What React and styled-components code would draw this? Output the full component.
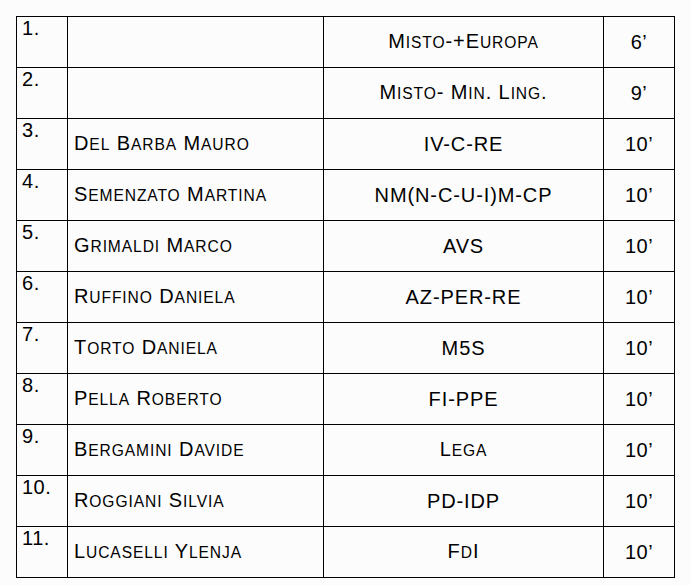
import styled, { createGlobalStyle } from "styled-components";

const GlobalStyle = createGlobalStyle`
  html, body {
    margin: 0;
    background: #fcfcfc;
  }
`;

const rows = [
  { name: "", group: "Misto-+Europa", time: "6’" },
  { name: "", group: "Misto- Min. Ling.", time: "9’" },
  { name: "Del Barba Mauro", group: "IV-C-RE", time: "10’" },
  { name: "Semenzato Martina", group: "NM(N-C-U-I)M-CP", time: "10’" },
  { name: "Grimaldi Marco", group: "AVS", time: "10’" },
  { name: "Ruffino Daniela", group: "AZ-PER-RE", time: "10’" },
  { name: "Torto Daniela", group: "M5S", time: "10’" },
  { name: "Pella Roberto", group: "FI-PPE", time: "10’" },
  { name: "Bergamini Davide", group: "Lega", time: "10’" },
  { name: "Roggiani Silvia", group: "PD-IDP", time: "10’" },
  { name: "Lucaselli Ylenja", group: "FdI", time: "10’" },
];

const Page = styled.div`
  padding: 16px;
`;

const Table = styled.table`
  border-collapse: collapse;
  table-layout: fixed;
  width: 659px;
  font-family: "Liberation Sans", Arial, sans-serif;
  color: #000;
`;

const Col = styled.col`
  width: ${(p) => p.w}px;
`;

const Row = styled.tr`
  height: 51px;
`;

const Cell = styled.td`
  border: 1px solid #000;
  padding: 0 6px;
  font-size: 20px;
  line-height: 22px;
  letter-spacing: ${(p) => (p.caps ? "0.9px" : "0.5px")};
  vertical-align: middle;
  text-align: ${(p) => p.align || "left"};
  white-space: nowrap;
`;

const NumCell = styled(Cell)`
  vertical-align: top;
  padding: 0 5px;
`;

const Small = styled.span`
  font-size: 0.78em;
`;

// word-style small caps: lowercase letters drawn as smaller capitals
const SmallCaps = ({ text }) => {
  const parts = text.match(/([a-zà-ÿ]+|[^a-zà-ÿ]+)/g) || [];
  return parts.map((p, i) =>
    /[a-zà-ÿ]/.test(p) ? <Small key={i}>{p.toUpperCase()}</Small> : <span key={i}>{p}</span>
  );
};

export default function App() {
  return (
    <Page>
      <GlobalStyle />
      <Table>
        <colgroup>
          <Col w={51} />
          <Col w={256} />
          <Col w={280} />
          <Col w={71} />
        </colgroup>
        <tbody>
          {rows.map((r, i) => (
            <Row key={i}>
              <NumCell>{i + 1}.</NumCell>
              <Cell caps>
                <SmallCaps text={r.name} />
              </Cell>
              <Cell caps align="center">
                <SmallCaps text={r.group} />
              </Cell>
              <Cell align="center">{r.time}</Cell>
            </Row>
          ))}
        </tbody>
      </Table>
    </Page>
  );
}
